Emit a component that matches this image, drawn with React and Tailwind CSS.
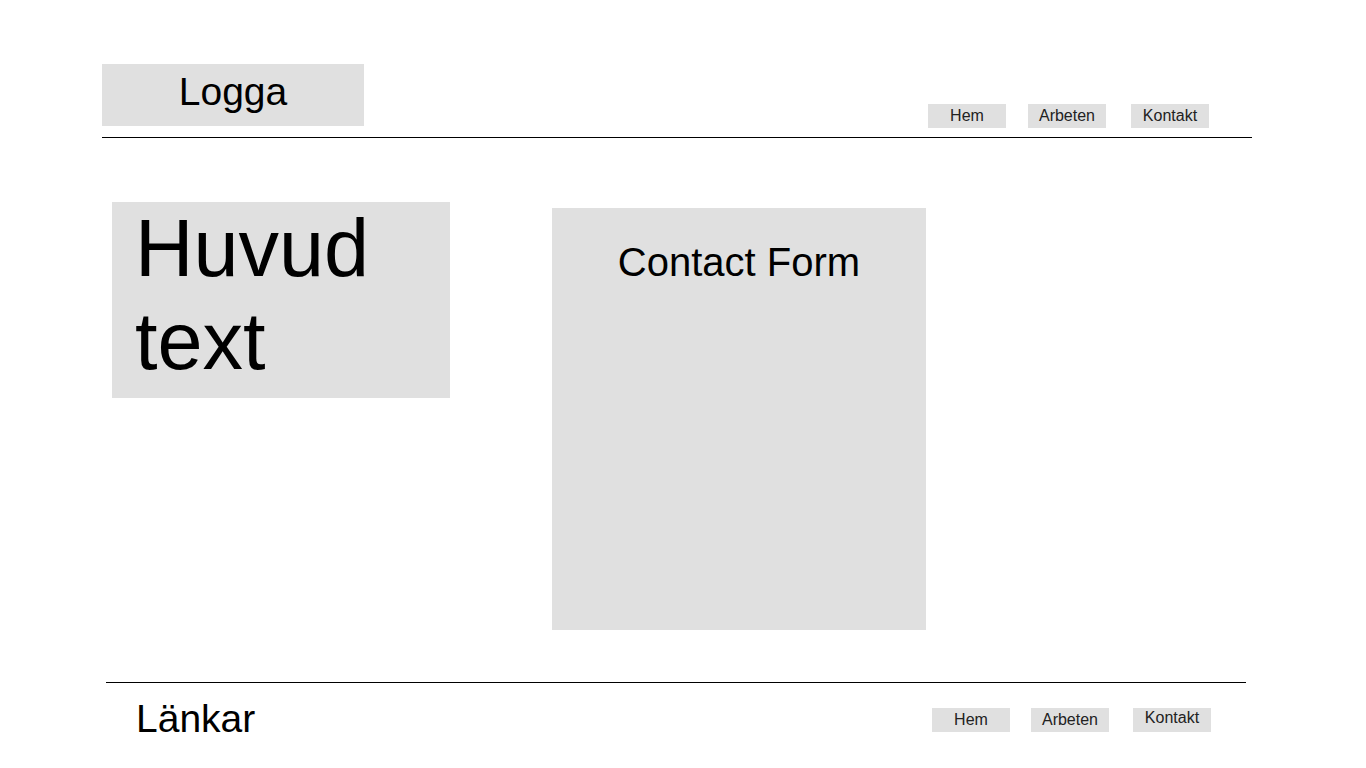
const NavBox = ({ label, className = '' }) => (
  <div className={`w-[78px] h-[24px] bg-[#e0e0e0] flex items-center justify-center text-[16px] leading-[1.15] text-[#222] ${className}`}>
    {label}
  </div>
)

export default function App() {
  return (
    <div className="w-[1366px] h-[768px] bg-white text-black font-['Liberation_Sans',Arial,sans-serif] overflow-hidden">
      {/* Header */}
      <header className="ml-[102px] w-[1150px] pt-[64px] pb-[9px] border-b border-black flex items-start">
        <div className="w-[262px] h-[62px] bg-[#e0e0e0] flex items-center justify-center pb-[7px] text-[39px] leading-none">
          Logga
        </div>
        <nav className="ml-auto mr-[43px] mt-[40px] flex">
          <NavBox label="Hem" />
          <NavBox label="Arbeten" className="ml-[22px]" />
          <NavBox label="Kontakt" className="ml-[25px]" />
        </nav>
      </header>

      {/* Main */}
      <main className="flex items-start pl-[112px] mt-[64px]">
        <div className="w-[338px] h-[196px] bg-[#e0e0e0] pl-[23px] text-[81px] leading-[1.149]">
          Huvud<br />text
        </div>
        <div className="ml-[102px] mt-[6px] w-[374px] h-[422px] bg-[#e0e0e0] pt-[32px] text-center text-[40px] leading-[1.149]">
          Contact Form
        </div>
      </main>

      {/* Footer */}
      <footer className="ml-[106px] w-[1140px] mt-[52px] border-t border-black flex items-start">
        <div className="pl-[30px] pt-[14px] text-[39px] leading-[1.149]">Länkar</div>
        <nav className="ml-auto mr-[35px] mt-[25px] flex">
          <NavBox label="Hem" />
          <NavBox label="Arbeten" className="ml-[21px]" />
          <NavBox label="Kontakt" className="ml-[24px] pb-[4px]" />
        </nav>
      </footer>
    </div>
  )
}
